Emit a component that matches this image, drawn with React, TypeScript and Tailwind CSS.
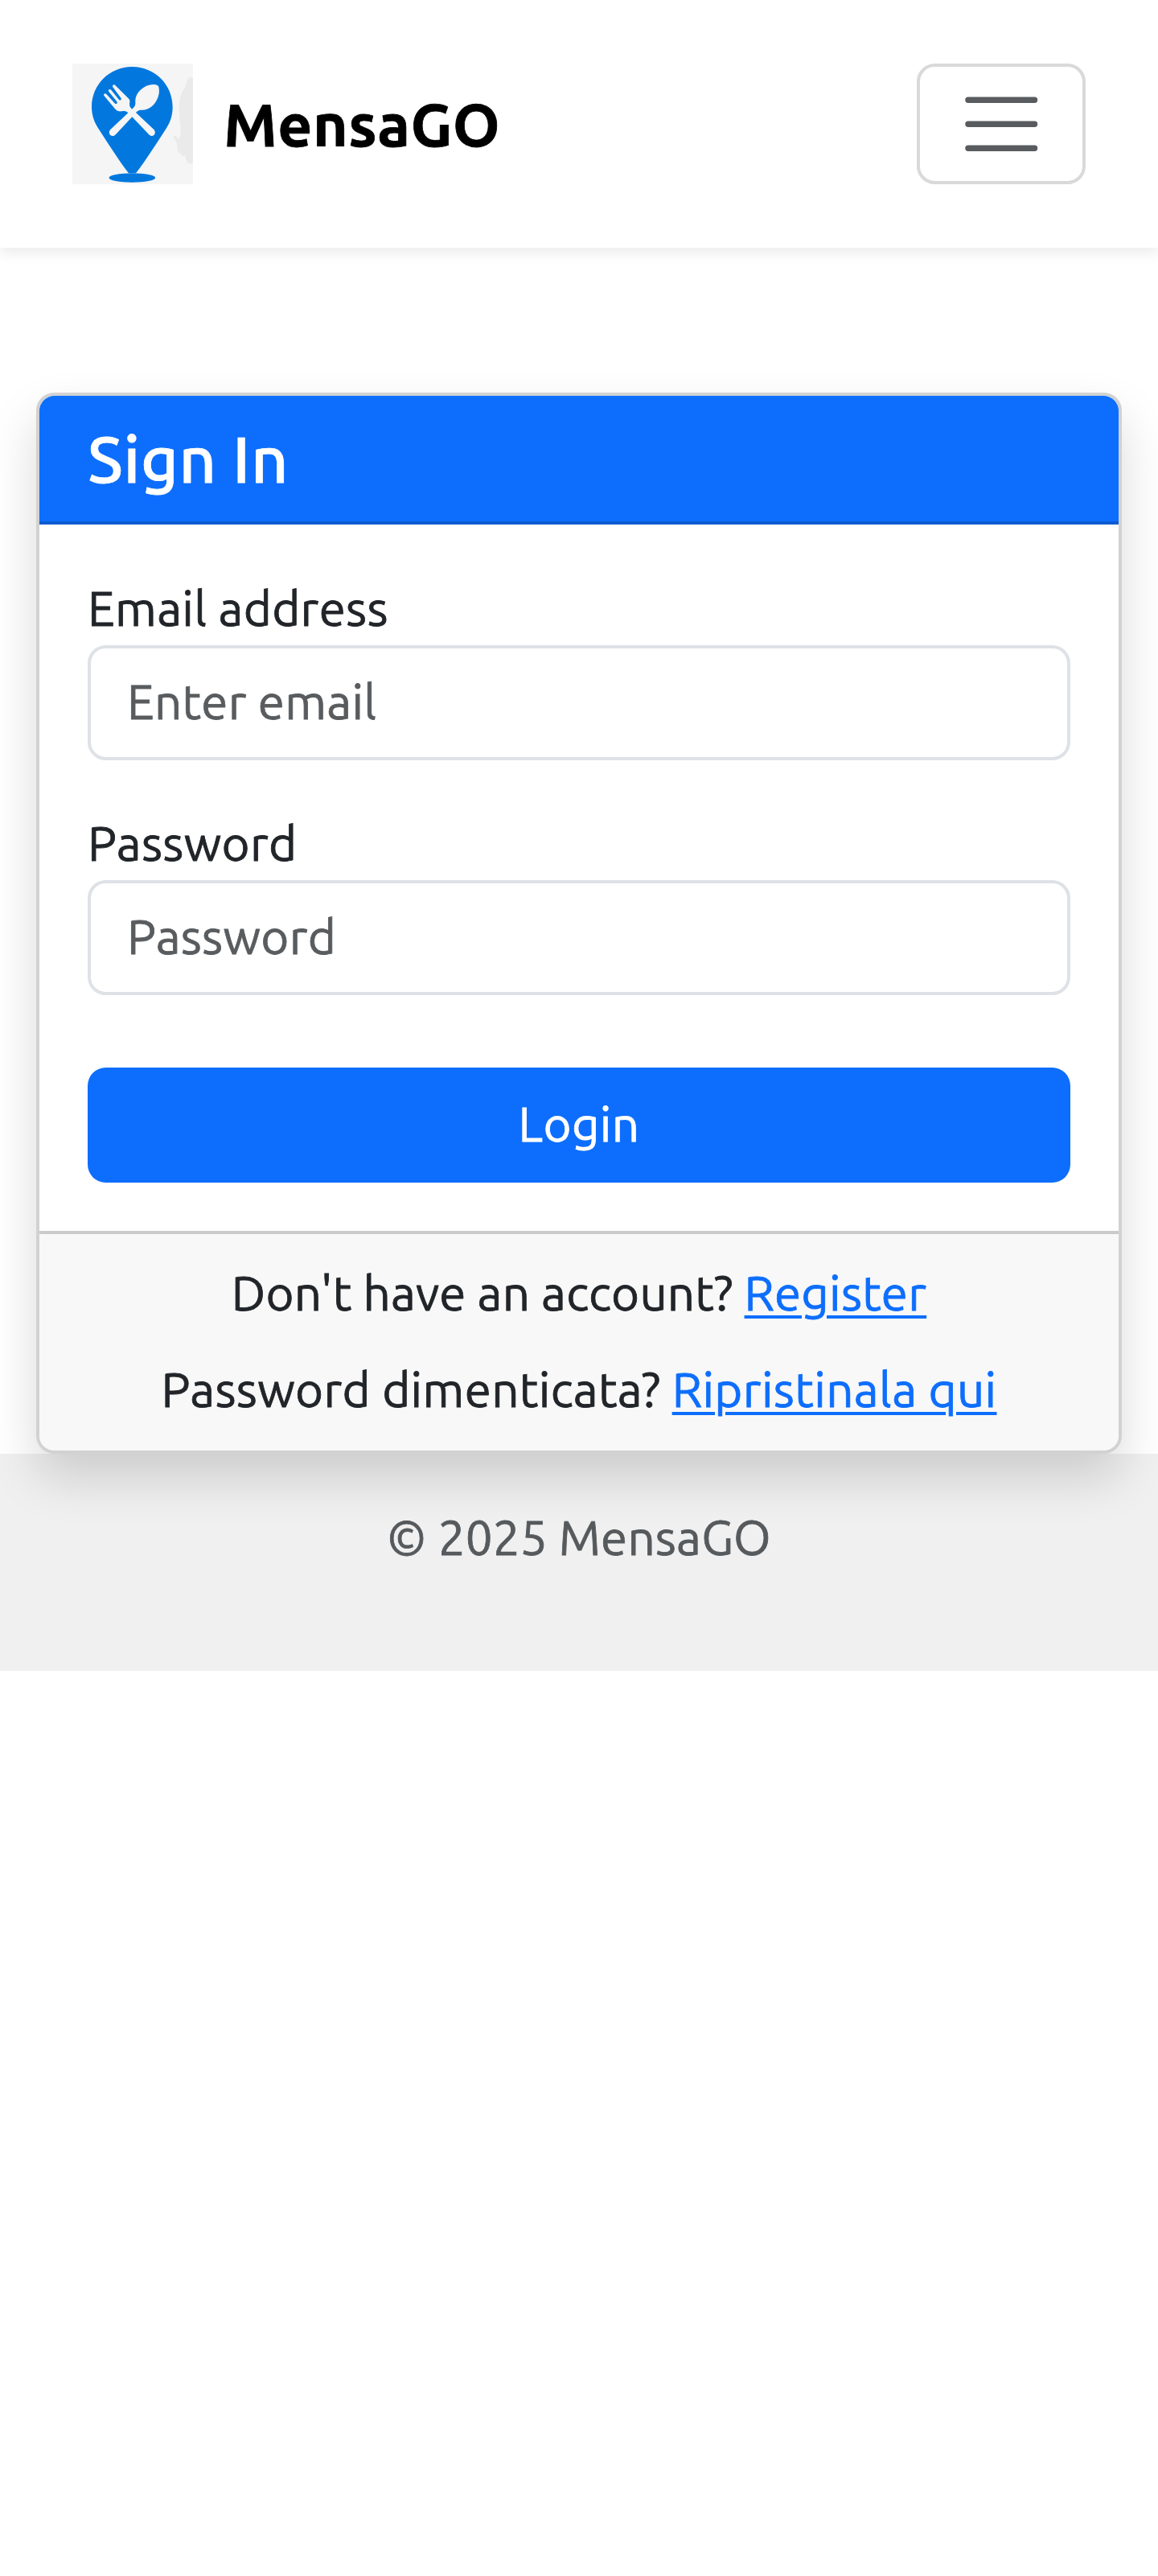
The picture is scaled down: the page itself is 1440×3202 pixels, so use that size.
import type { ReactNode } from "react";

function Logo() {
  return (
    <svg viewBox="60 57 450 450" className="size-[150px] shrink-0" aria-hidden="true">
      <rect x="60" y="57" width="450" height="450" fill="#f5f5f5" />
      <path
        d="M510 112C502 104 490 108 486 122C484 134 482 145 474 155C462 175 458 200 458 230C459 265 465 290 464 322C461 332 457 338 454 338C450 330 444 324 438 327C434 333 440 340 446 345C453 357 451 372 454 388C458 395 462 392 463 386C464 400 470 406 476 400C480 397 482 402 483 410C487 425 497 432 504 430L510 424Z"
        fill="#eaeaea"
      />
      <path
        d="M283 69C199 69 132 136 132 218C132 248 141 274 157 299C190 350 229 411 270 466H297C338 411 377 350 410 299C426 274 434 248 434 218C434 136 367 69 283 69Z"
        fill="#0278de"
      />
      <ellipse cx="283" cy="483" rx="86.5" ry="17" fill="#0278de" />
      <path
        d="M219 137C214 133 207 139 211 145L241 185C245 191 239 197 234 192L205 156C200 149 191 155 196 162L226 199C230 205 224 210 219 206L187 171C181 165 174 172 179 178L219 226C226 234 234 236 244 235C255 233 261 234 268 241L202 303C195 310 197 320 203 325C209 329 217 327 222 321L283 256L345 321C350 327 358 329 364 324C370 319 370 310 364 303L297 240C305 231 311 230 322 230C344 230 361 216 372 198C383 180 385 164 383 149C382 140 378 137 370 136C352 133 332 140 317 153C301 167 294 182 295 202C296 214 291 219 283 227C274 219 272 214 274 201C275 195 273 191 269 187Z"
        fill="#f5f5f5"
      />
    </svg>
  );
}

function Field({ label, type, placeholder }: { label: string; type: string; placeholder: string }) {
  return (
    <div>
      <label className="block pb-0.5 leading-[88px]">{label}</label>
      <input
        type={type}
        placeholder={placeholder}
        className="block h-[143px] w-full rounded-[22.5px] border-4 border-[#dee2e6] bg-white px-[45px] pb-[5px] tracking-[0.3px] placeholder:text-[#595c5f] placeholder:opacity-100"
      />
    </div>
  );
}

function TextLink({ children }: { children: ReactNode }) {
  return (
    <a href="#" className="text-[#0d6efd] underline decoration-[4px] underline-offset-[6px]">
      {children}
    </a>
  );
}

export default function App() {
  return (
    <div className="min-h-[3202px] overflow-hidden bg-white font-[Ubuntu,'Noto_Sans',sans-serif] text-[60px] leading-[90px] tracking-[0.36px] text-[#212529] [-webkit-text-stroke-width:0.8px]">
      <nav className="relative flex h-[308px] items-center justify-between px-[90px] shadow-[0_7.5px_15px_rgba(0,0,0,0.075)]">
        <a href="#" className="flex items-center gap-[38px]">
          <Logo />
          <span className="text-[75px] font-bold tracking-[0.5px] text-black">MensaGO</span>
        </a>
        <button
          aria-label="Toggle navigation"
          className="flex h-[150px] w-[210px] items-center justify-center rounded-[22.5px] border-4 border-[#d9d9d9]"
        >
          <svg
            viewBox="0 0 30 30"
            className="size-[112.5px]"
            stroke="rgba(33,37,41,0.75)"
            strokeLinecap="round"
            strokeMiterlimit="10"
            strokeWidth="2"
          >
            <path d="M4 7h22M4 15h22M4 23h22" />
          </svg>
        </button>
      </nav>

      <main className="px-[45px] pt-[180px]">
        <section className="relative rounded-[22.5px] border-4 border-[#d2d2d2] bg-white shadow-[0_30px_60px_rgba(0,0,0,0.15)]">
          <header className="h-[160px] rounded-t-[18.75px] border-b-4 border-[#0b5bd1] bg-[#0d6efd] px-[60px] pt-[30px] text-white">
            <h4 className="text-[80.8px] leading-[97px] font-medium tracking-[0.6px]">Sign In</h4>
          </header>
          <form className="flex flex-col gap-[59px] p-[60px]">
            <Field label="Email address" type="email" placeholder="Enter email" />
            <Field label="Password" type="password" placeholder="Password" />
            <button
              type="button"
              className="mt-[31px] h-[143px] w-full rounded-[22.5px] bg-[#0d6efd] pb-[3px] tracking-[0.36px] text-white"
            >
              Login
            </button>
          </form>
          <footer className="flex flex-col gap-[30px] rounded-b-[18.75px] border-t-4 border-[#cbcbcb] bg-[#f8f8f8] pt-[28px] pb-[31px] text-center">
            <p className="tracking-[0.22px]">
              Don't have an account? <TextLink>Register</TextLink>
            </p>
            <p>
              Password dimenticata? <TextLink>Ripristinala qui</TextLink>
            </p>
          </footer>
        </section>
      </main>

      <footer className="h-[270px] bg-[#f0f0f0] pt-[59px] text-center tracking-[0.2px] text-[#565a5d]">
        © 2025 MensaGO
      </footer>
    </div>
  );
}
